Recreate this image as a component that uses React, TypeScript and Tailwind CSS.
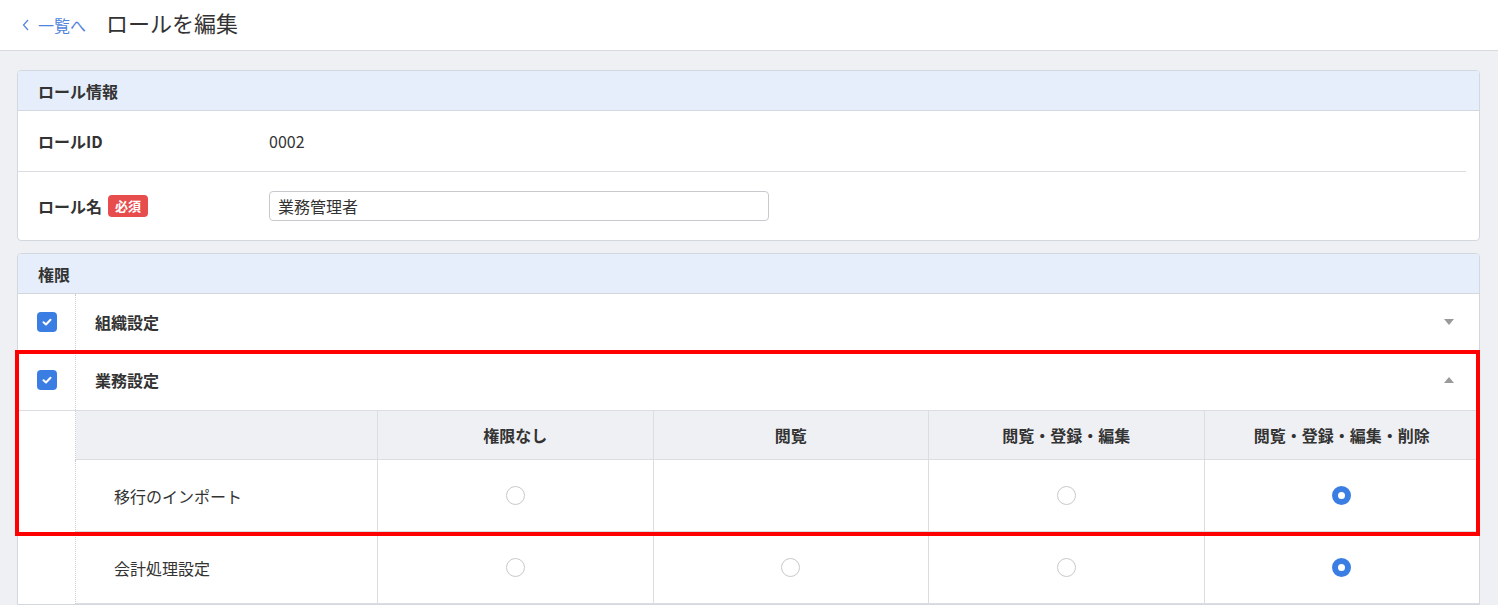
const font = { fontFamily: '"Noto Sans CJK JP", "Noto Sans", "Liberation Sans", sans-serif' };

function CheckBox() {
  return (
    <div className="w-[20px] h-[20px] rounded-[4px] bg-[#3b7ee3] flex items-center justify-center">
      <svg width="12" height="12" viewBox="0 0 12 12" fill="none">
        <polyline points="2.5,6.2 5,8.5 9.5,3.8" stroke="#fff" strokeWidth="2" strokeLinecap="round" strokeLinejoin="round" />
      </svg>
    </div>
  );
}

function Radio({ checked }: { checked?: boolean }) {
  if (checked) {
    return <div className="w-[19px] h-[19px] rounded-full border-[6px] border-[#3b7ee3] bg-white" />;
  }
  return <div className="w-[19px] h-[19px] rounded-full border border-[#c9c9cc] bg-white" />;
}

const columns = ['権限なし', '閲覧', '閲覧・登録・編集', '閲覧・登録・編集・削除'];

interface PermRow {
  name: string;
  options: (boolean | null)[];
}

const rows: PermRow[] = [
  { name: '移行のインポート', options: [false, null, false, true] },
  { name: '会計処理設定', options: [false, false, false, true] },
];

function DataRow({ row }: { row: PermRow }) {
  return (
    <div className="flex">
      <div className="w-[58px] shrink-0 border-r border-dotted border-[#c9ccd3]" />
      <div className="flex-1 grid grid-cols-[301px_1fr_1fr_1fr_1fr] h-[72px] border-b border-[#dcdde2]">
        <div className="flex items-center pl-[38px] text-[16px] text-[#333]">{row.name}</div>
        {row.options.map((opt, i) => (
          <div key={i} className="flex items-center justify-center border-l border-[#dcdde2]">
            {opt !== null && <Radio checked={opt} />}
          </div>
        ))}
      </div>
    </div>
  );
}

export default function App() {
  return (
    <div style={font} className="w-[1498px] h-[605px] overflow-hidden bg-[#eff0f4] text-[#333]">
      <div className="h-[51px] bg-white border-b border-[#d9dadf] flex items-center pl-[21px]">
        <div className="flex items-center text-[16px] text-[#4f84dc]">
          <svg width="10" height="16" viewBox="0 0 10 16" fill="none" className="mr-[7px]">
            <polyline points="7,3 2.5,8 7,13" stroke="#4f84dc" strokeWidth="1.2" />
          </svg>
          一覧へ
        </div>
        <div className="ml-[20px] text-[22px] text-[#333] -mt-[5px]">ロールを編集</div>
      </div>

      <div className="pt-[19px] pl-[17px] pr-[18px]">
        <div className="bg-white border border-[#d3d7de] rounded-[4px] overflow-hidden">
          <div className="h-[40px] bg-[#e5eefa] border-b border-[#d3d7de] flex items-center pl-[20px] text-[16px] font-bold">
            ロール情報
          </div>
          <div className="h-[61px] flex items-center pl-[20px] mr-[13px] border-b border-[#dcdde2]">
            <div className="w-[231px] text-[16px] font-bold">ロールID</div>
            <div className="text-[16px]">0002</div>
          </div>
          <div className="h-[68px] flex items-center pl-[20px]">
            <div className="w-[231px] flex items-center text-[16px] font-bold">
              ロール名
              <span className="ml-[6px] h-[22px] px-[7px] rounded-[4px] bg-[#e84d4d] text-white text-[13px] font-bold flex items-center">
                必須
              </span>
            </div>
            <input
              readOnly
              value="業務管理者"
              style={font}
              className="w-[500px] h-[30px] border border-[#c8c9cc] rounded-[4px] px-[8px] text-[16px] text-[#333] outline-none"
            />
          </div>
        </div>

        <div className="mt-[12px] bg-white border border-[#d3d7de] rounded-t-[4px]">
          <div className="h-[40px] bg-[#e5eefa] border-b border-[#d3d7de] rounded-t-[4px] flex items-center pl-[20px] text-[16px] font-bold">
            権限
          </div>

          <div className="flex h-[56px]">
            <div className="w-[58px] shrink-0 border-r border-dotted border-[#c9ccd3] flex items-center justify-center">
              <CheckBox />
            </div>
            <div className="flex-1 flex items-center justify-between pl-[19px] pr-[25px] text-[16px] font-bold">
              組織設定
              <div className="w-0 h-0 border-l-[5px] border-r-[5px] border-t-[6px] border-l-transparent border-r-transparent border-t-[#9a9a9a]" />
            </div>
          </div>

          <div className="relative">
            <div className="flex h-[60px]">
              <div className="w-[58px] shrink-0 border-r border-dotted border-[#c9ccd3] flex items-center justify-center">
                <CheckBox />
              </div>
              <div className="flex-1 flex items-center justify-between pl-[19px] pr-[25px] text-[16px] font-bold">
                業務設定
                <div className="w-0 h-0 border-l-[5px] border-r-[5px] border-b-[6px] border-l-transparent border-r-transparent border-b-[#9a9a9a]" />
              </div>
            </div>

            <div className="flex border-t border-[#dcdde2]">
              <div className="w-[58px] shrink-0 border-r border-dotted border-[#c9ccd3]" />
              <div className="flex-1 grid grid-cols-[301px_1fr_1fr_1fr_1fr] h-[49px] bg-[#eff0f4] border-b border-[#dcdde2]">
                <div />
                {columns.map((c) => (
                  <div key={c} className="flex items-center justify-center border-l border-[#dcdde2] text-[16px] font-bold">
                    {c}
                  </div>
                ))}
              </div>
            </div>

            <DataRow row={rows[0]} />

            <div className="absolute -left-[3px] -right-[1px] top-0 -bottom-[4px] border-[4px] border-[#ff0000] pointer-events-none" />
          </div>

          <DataRow row={rows[1]} />
        </div>
      </div>
    </div>
  );
}
